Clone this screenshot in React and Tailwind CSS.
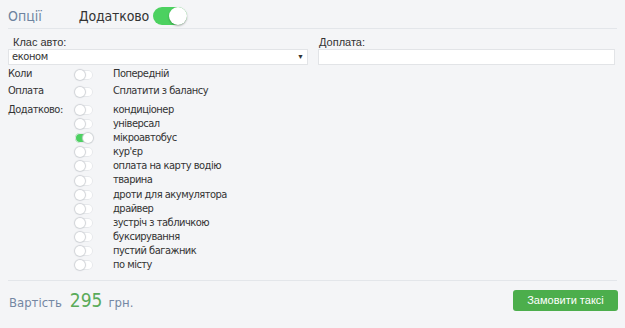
import React, { useState } from 'react';

const extras = [
  'кондиціонер',
  'універсал',
  'мікроавтобус',
  'кур\'єр',
  'оплата на карту водію',
  'тварина',
  'дроти для акумулятора',
  'драйвер',
  'зустріч з табличкою',
  'буксирування',
  'пустий багажник',
  'по місту',
];

function MiniToggle({ on, onClick }) {
  return (
    <button
      onClick={onClick}
      className={`relative w-[18px] h-[10px] rounded-full shrink-0 shadow-[inset_0_0_0_1px_#e6e8eb] ${on ? 'bg-[#4cd160]' : 'bg-white'}`}
    >
      <span
        className={`absolute top-0 w-[10px] h-[10px] rounded-full bg-white shadow-[0_0_1px_1px_#cfd2d6] ${on ? 'left-[8px]' : 'left-0'}`}
      />
    </button>
  );
}

function App() {
  const [extra, setExtra] = useState(true);
  const [checked, setChecked] = useState({ 'мікроавтобус': true });
  const [timeOn, setTimeOn] = useState(false);
  const [balance, setBalance] = useState(false);

  const toggle = (name) => setChecked({ ...checked, [name]: !checked[name] });

  return (
    <div className="w-[625px] h-[328px] bg-[#f4f5f7] px-2 font-['DejaVu_Sans_Condensed','DejaVu_Sans',sans-serif] font-stretch-condensed text-[#333]">
      {/* Header */}
      <header className="flex items-center h-[29px] border-b border-[#e3e6ea]">
        <span className="text-[14px] text-[#6d83a0] pt-[4px]">Опції</span>
        <span className="ml-[37px] text-[14px] tracking-[-0.15px] text-[#333] pt-[4px]">Додатково</span>
        <button
          onClick={() => setExtra(!extra)}
          className={`relative ml-[4px] mt-[4px] w-[34px] h-[18px] rounded-full ${extra ? 'bg-[#4cd160]' : 'bg-white'}`}
        >
          <span
            className={`absolute top-0 w-[18px] h-[18px] rounded-full bg-white shadow-[0_1px_2px_rgba(0,0,0,0.3)] ${extra ? 'left-[16px]' : 'left-0'}`}
          />
        </button>
      </header>

      {/* Selects */}
      <section className="flex gap-[10px] mt-[8px] font-['Liberation_Sans',sans-serif] font-stretch-normal text-[11px]">
        <div className="w-[300px]">
          <label className="block pl-[5px] leading-[11px] text-[#333]">Клас авто:</label>
          <div className="mt-[1px] h-[16px] bg-white border border-[#e2e4e7] flex items-center justify-between px-[3px]">
            <span className="font-['DejaVu_Sans_Condensed','DejaVu_Sans',sans-serif] font-stretch-condensed text-[11px] tracking-[-0.4px]">економ</span>
            <span className="text-[7px] text-[#333]">▼</span>
          </div>
        </div>
        <div className="flex-1 pr-[2px]">
          <label className="block pl-[1px] leading-[11px] text-[#333]">Доплата:</label>
          <div className="mt-[1px] h-[16px] bg-white border border-[#e2e4e7]" />
        </div>
      </section>

      {/* Options */}
      <section className="mt-[1px] text-[11px] leading-[14.1px] tracking-[-0.5px]">
        <div className="flex items-center h-[17px]">
          <span className="w-[67px]">Коли</span>
          <MiniToggle on={timeOn} onClick={() => setTimeOn(!timeOn)} />
          <span className="ml-[20px]">Попередній</span>
        </div>
        <div className="flex items-center h-[17px]">
          <span className="w-[67px]">Оплата</span>
          <MiniToggle on={balance} onClick={() => setBalance(!balance)} />
          <span className="ml-[20px]">Сплатити з балансу</span>
        </div>
        <div className="flex mt-[3px]">
          <span className="w-[67px]">Додатково:</span>
          <ul>
            {extras.map((name) => (
              <li key={name} className="flex items-center h-[14.1px]">
                <MiniToggle on={!!checked[name]} onClick={() => toggle(name)} />
                <span className="ml-[20px]">{name}</span>
              </li>
            ))}
          </ul>
        </div>
      </section>

      {/* Footer */}
      <footer className="mt-[8px] border-t border-[#e3e6ea] flex items-center justify-between pt-[9px]">
        <div className="flex items-baseline pl-[1px] h-[21px] pt-[1px]">
          <span className="text-[13px] text-[#7487a3]">Вартість</span>
          <span className="ml-[8px] text-[19px] leading-[18px] text-[#5aab5a]">295</span>
          <span className="ml-[6px] text-[13px] text-[#7487a3]">грн.</span>
        </div>
        <button className="w-[105px] h-[21px] -mr-[1px] rounded-[3px] bg-[#4cae4c] text-white text-[11px] font-['Liberation_Sans',sans-serif] font-stretch-normal">
          Замовити таксі
        </button>
      </footer>
    </div>
  );
}

export default App;
